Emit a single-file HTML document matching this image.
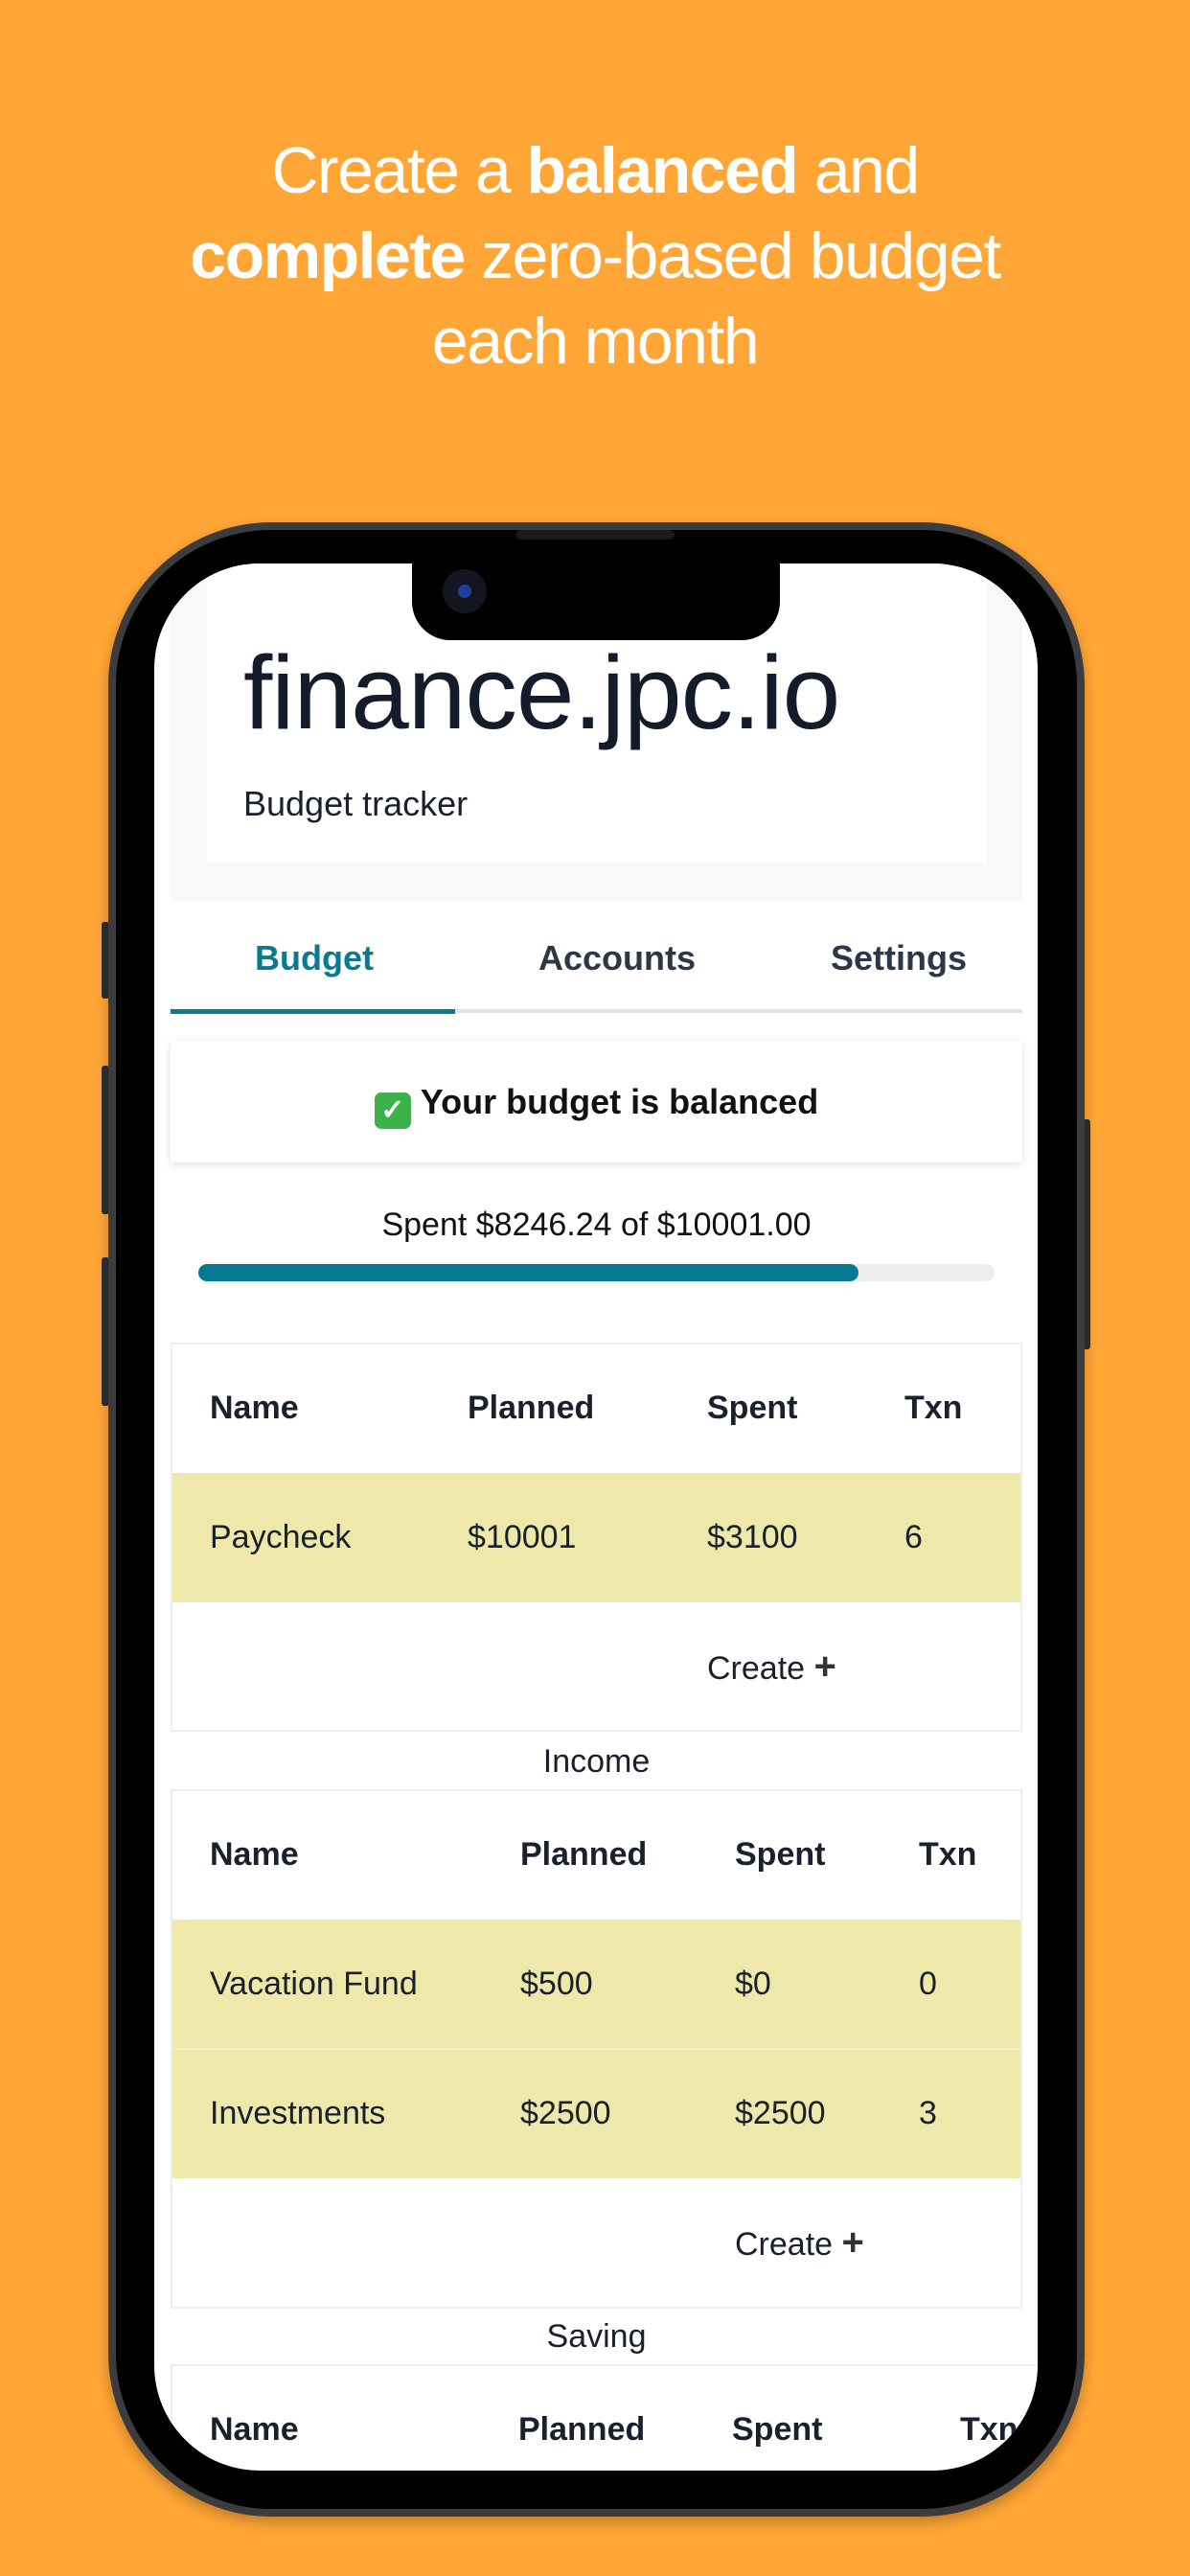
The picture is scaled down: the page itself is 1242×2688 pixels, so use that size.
<!DOCTYPE html>
<html><head><meta charset="utf-8"><style>
*{margin:0;padding:0;box-sizing:border-box}
body{width:1242px;height:2688px;background:#FFA636;position:relative;overflow:hidden;font-family:"Liberation Sans",sans-serif}
.h{position:absolute;left:0;width:1242px;text-align:center;color:#fff;font-size:68px;letter-spacing:-1.5px;line-height:89px}
.phone{position:absolute;left:113px;top:545px;width:1019px;height:2081px;border-radius:170px;background:#3c3c3e;box-shadow:0 6px 14px rgba(0,0,0,.25)}
.inner{position:absolute;left:8px;top:8px;right:8px;bottom:8px;border-radius:162px;background:#000}
.btn{position:absolute;background:#2e2e30;width:8px;border-radius:3px}
.screen{position:absolute;left:161px;top:588px;width:922px;height:1990px;border-radius:110px;background:#fff;overflow:hidden;color:#1a202c}
.a{position:absolute}
.t{position:absolute;font-size:34px;line-height:46px}
.b{font-weight:bold}
.tab{position:absolute;top:0;border:2px solid #eee}
</style></head><body>
<div class="h" style="top:134px">Create a <b>balanced</b> and</div>
<div class="h" style="top:223px"><b>complete</b> zero-based budget</div>
<div class="h" style="top:312px">each month</div>

<div class="btn" style="left:106px;top:962px;height:80px"></div>
<div class="btn" style="left:106px;top:1112px;height:155px"></div>
<div class="btn" style="left:106px;top:1312px;height:155px"></div>
<div class="btn" style="left:1130px;top:1168px;height:240px"></div>
<div class="phone"><div class="inner"></div></div>

<div class="screen">
  <div class="a" style="left:17px;top:0;width:889px;height:351px;background:#f8f8f8"></div>
  <div class="a" style="left:55px;top:0;width:814px;height:313px;background:#fff"></div>
  <div class="a" style="left:93px;top:72px;font-size:109px;line-height:126px;color:#141c2b;letter-spacing:-1px">finance.jpc.io</div>
  <div class="t" style="left:93px;top:228px;font-size:36px">Budget tracker</div>

  <div class="t b" style="left:100px;top:389px;width:134px;text-align:center;font-size:36px;color:#0b7a90">Budget</div>
  <div class="t b" style="left:383px;top:389px;width:200px;text-align:center;font-size:36px;color:#2d3748">Accounts</div>
  <div class="t b" style="left:677px;top:389px;width:200px;text-align:center;font-size:36px;color:#2d3748">Settings</div>
  <div class="a" style="left:17px;top:465px;width:889px;height:4px;background:#e2e2e2"></div>
  <div class="a" style="left:17px;top:465px;width:297px;height:5px;background:#0b7a90"></div>

  <div class="a" style="left:17px;top:498px;width:889px;height:127px;background:#fff;box-shadow:0 2px 8px rgba(0,0,0,.12)"></div>
  <div class="t b" style="left:17px;top:539px;width:889px;text-align:center;font-size:36px;color:#111"><span style="display:inline-block;width:38px;height:38px;background:#3cb34a;border-radius:7px;color:#fff;font-size:30px;line-height:38px;vertical-align:-6px;margin-right:10px">✓</span>Your budget is balanced</div>

  <div class="t" style="left:17px;top:667px;width:889px;text-align:center;color:#111">Spent $8246.24 of $10001.00</div>
  <div class="a" style="left:46px;top:731px;width:831px;height:18px;border-radius:9px;background:#eeeeee"></div>
  <div class="a" style="left:46px;top:731px;width:689px;height:18px;border-radius:9px;background:#077a91"></div>

  <div class="tab" style="left:17px;top:813px;width:889px;height:406px"></div>
  <div class="a" style="left:19px;top:949px;width:885px;height:135px;background:#eee8aa"></div>
  <div class="t b" style="left:58px;top:858px">Name</div>
  <div class="t b" style="left:327px;top:858px">Planned</div>
  <div class="t b" style="left:577px;top:858px">Spent</div>
  <div class="t b" style="left:783px;top:858px">Txn</div>
  <div class="t" style="left:58px;top:993px">Paycheck</div>
  <div class="t" style="left:327px;top:993px">$10001</div>
  <div class="t" style="left:577px;top:993px">$3100</div>
  <div class="t" style="left:783px;top:993px">6</div>
  <div class="t" style="left:577px;top:1128px">Create <b style="font-size:40px;color:#333">+</b></div>
  <div class="t" style="left:17px;top:1227px;width:889px;text-align:center">Income</div>

  <div class="tab" style="left:17px;top:1279px;width:889px;height:542px"></div>
  <div class="a" style="left:19px;top:1415px;width:885px;height:270px;background:#eee8aa"></div>
  <div class="a" style="left:19px;top:1549px;width:885px;height:2px;background:#f2eecb"></div>
  <div class="t b" style="left:58px;top:1324px">Name</div>
  <div class="t b" style="left:382px;top:1324px">Planned</div>
  <div class="t b" style="left:606px;top:1324px">Spent</div>
  <div class="t b" style="left:798px;top:1324px">Txn</div>
  <div class="t" style="left:58px;top:1459px">Vacation Fund</div>
  <div class="t" style="left:382px;top:1459px">$500</div>
  <div class="t" style="left:606px;top:1459px">$0</div>
  <div class="t" style="left:798px;top:1459px">0</div>
  <div class="t" style="left:58px;top:1594px">Investments</div>
  <div class="t" style="left:382px;top:1594px">$2500</div>
  <div class="t" style="left:606px;top:1594px">$2500</div>
  <div class="t" style="left:798px;top:1594px">3</div>
  <div class="t" style="left:606px;top:1729px">Create <b style="font-size:40px;color:#333">+</b></div>
  <div class="t" style="left:17px;top:1827px;width:889px;text-align:center">Saving</div>

  <div class="tab" style="left:17px;top:1879px;width:960px;height:300px"></div>
  <div class="t b" style="left:58px;top:1924px">Name</div>
  <div class="t b" style="left:380px;top:1924px">Planned</div>
  <div class="t b" style="left:603px;top:1924px">Spent</div>
  <div class="t b" style="left:841px;top:1924px">Txn</div>
</div>

<div class="a" style="left:430px;top:580px;width:384px;height:88px;background:#000;border-radius:0 0 40px 40px"></div>
<div class="a" style="left:538px;top:553px;width:166px;height:10px;background:#1a1a1a;border-radius:5px"></div>
<div class="a" style="left:462px;top:594px;width:46px;height:46px;background:#151520;border-radius:50%"></div>
<div class="a" style="left:478px;top:610px;width:14px;height:14px;background:#1d3f9a;border-radius:50%"></div>
</body></html>
